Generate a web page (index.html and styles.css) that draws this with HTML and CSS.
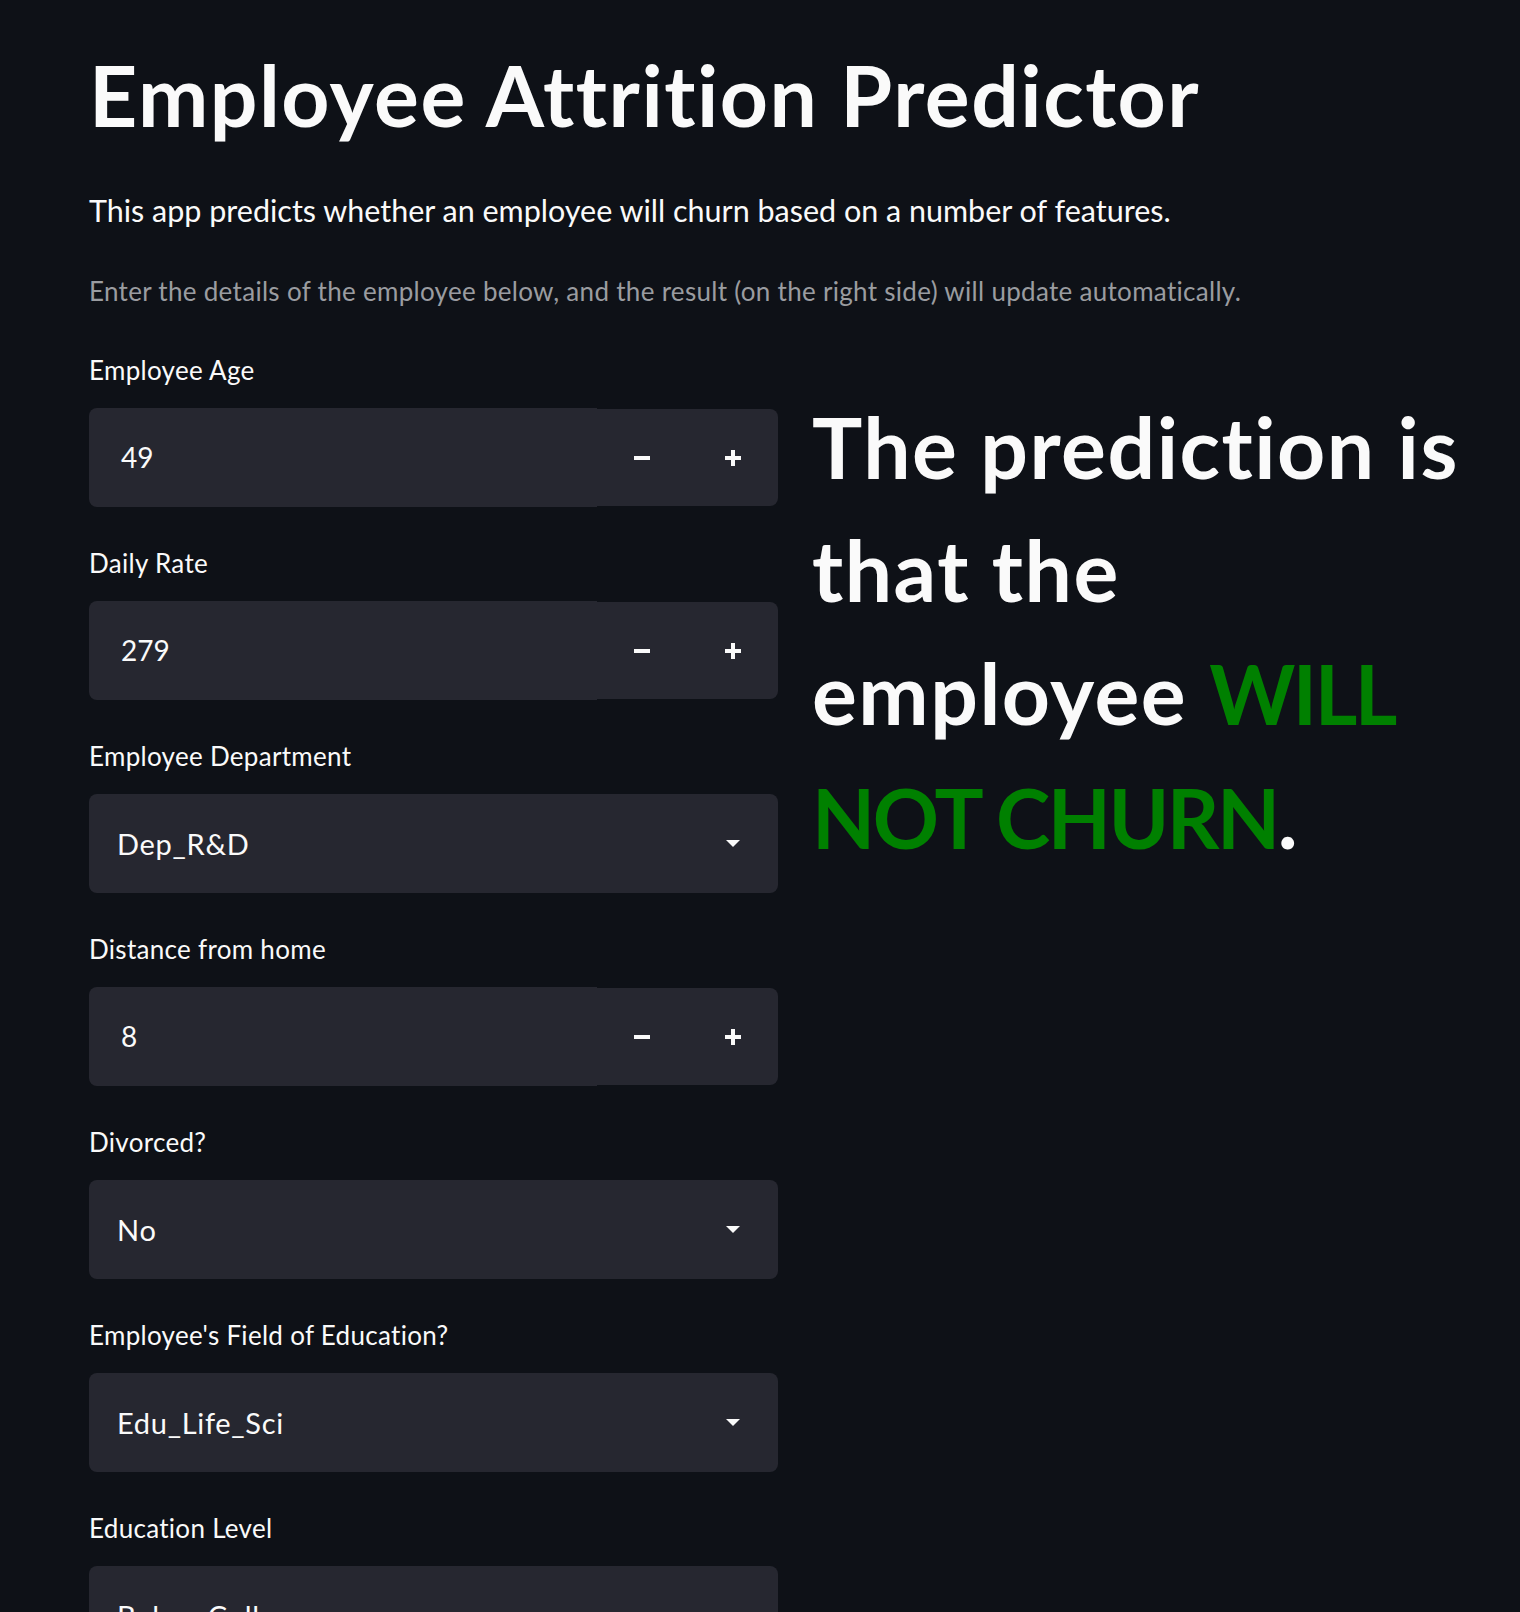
FILE: index.html
```html
<!DOCTYPE html>
<html lang="en">
<head>
<meta charset="utf-8">
<title>Employee Attrition Predictor</title>
<link rel="stylesheet" href="styles.css">
</head>
<body>
<main class="page">
  <h1 class="title">Employee Attrition Predictor</h1>
  <p class="lead">This app predicts whether an employee will churn based on a number of features.</p>
  <p class="caption">Enter the details of the employee below, and the result (on the right side) will update automatically.</p>

  <div class="columns">
    <div class="form">
      <div class="widget">
        <div class="label">Employee Age</div>
        <div class="number">
          <div class="number-value">49</div>
          <div class="steppers">
            <span class="step"><span class="minus"></span></span>
            <span class="step"><span class="plus"></span></span>
          </div>
        </div>
      </div>

      <div class="widget">
        <div class="label">Daily Rate</div>
        <div class="number">
          <div class="number-value">279</div>
          <div class="steppers">
            <span class="step"><span class="minus"></span></span>
            <span class="step"><span class="plus"></span></span>
          </div>
        </div>
      </div>

      <div class="widget">
        <div class="label">Employee Department</div>
        <div class="select">
          <span class="select-value">Dep_R&amp;D</span>
          <span class="caret"></span>
        </div>
      </div>

      <div class="widget">
        <div class="label">Distance from home</div>
        <div class="number">
          <div class="number-value">8</div>
          <div class="steppers">
            <span class="step"><span class="minus"></span></span>
            <span class="step"><span class="plus"></span></span>
          </div>
        </div>
      </div>

      <div class="widget">
        <div class="label">Divorced?</div>
        <div class="select">
          <span class="select-value">No</span>
          <span class="caret"></span>
        </div>
      </div>

      <div class="widget">
        <div class="label">Employee's Field of Education?</div>
        <div class="select">
          <span class="select-value">Edu_Life_Sci</span>
          <span class="caret"></span>
        </div>
      </div>

      <div class="widget">
        <div class="label">Education Level</div>
        <div class="select">
          <span class="select-value">Below College</span>
          <span class="caret"></span>
        </div>
      </div>
    </div>

    <div class="result">
      <h1 class="prediction">The prediction is that the employee <span class="good">WILL NOT CHURN</span>.</h1>
    </div>
  </div>
</main>
</body>
</html>
```

FILE: styles.css
```css
html, body {
  margin: 0;
  padding: 0;
  background: #0e1117;
}

body {
  font-family: "Lato", "Noto Sans", sans-serif;
  font-variant-ligatures: none;
  color: #fafafa;
  height: 1612px;
  overflow: hidden;
}

.page {
  padding: 45px 20px 0 89px;
}

.title {
  margin: 0;
  font-size: 84px;
  line-height: 100px;
  letter-spacing: 1.5px;
  font-weight: 700;
  color: #fafafa;
}

.lead {
  margin: 45px 0 0;
  font-size: 30.5px;
  line-height: 40px;
}

.caption {
  margin: 43px 0 0;
  font-size: 26px;
  line-height: 36px;
  letter-spacing: 0.3px;
  color: #9a9ca0;
}

.columns {
  margin-top: 43px;
  display: grid;
  grid-template-columns: 689px 1fr;
  column-gap: 34px;
  align-items: start;
}

.widget {
  display: flex;
  flex-direction: column;
  padding-bottom: 38px;
}

.label {
  font-size: 26px;
  line-height: 36px;
  letter-spacing: 0.3px;
  margin-bottom: 20px;
}

.number {
  display: flex;
  height: 99px;
}

.number-value {
  flex: 1;
  background: #262730;
  border-radius: 8px 0 0 8px;
  padding-left: 32px;
  font-size: 28px;
  line-height: 99px;
}

.steppers {
  display: flex;
  width: 181px;
  margin: 1px 0;
  background: #262730;
  border-radius: 0 8px 8px 0;
}

.step {
  flex: 1;
  display: flex;
  align-items: center;
  justify-content: center;
}

.minus {
  width: 16px;
  height: 4px;
  background: #fafafa;
}

.plus {
  position: relative;
  width: 16px;
  height: 16px;
}

.plus::before,
.plus::after {
  content: "";
  position: absolute;
  background: #fafafa;
}

.plus::before {
  left: 0;
  top: 6px;
  width: 16px;
  height: 4px;
}

.plus::after {
  left: 6px;
  top: 0;
  width: 4px;
  height: 16px;
}

.select {
  display: flex;
  align-items: center;
  justify-content: space-between;
  height: 99px;
  background: #262730;
  border-radius: 8px;
  padding: 0 38px 0 28px;
}

.select-value {
  font-size: 29px;
  line-height: 99px;
  letter-spacing: 0.7px;
}

.caret {
  width: 0;
  height: 0;
  border-left: 7px solid transparent;
  border-right: 7px solid transparent;
  border-top: 7px solid #fafafa;
}

.result {
  padding-top: 33px;
}

.prediction {
  margin: 0;
  font-size: 84px;
  line-height: 123px;
  letter-spacing: 1.5px;
  font-weight: 700;
  color: #fafafa;
}

.good {
  color: #008000;
  font-size: 82px;
  letter-spacing: -2.5px;
}
```
